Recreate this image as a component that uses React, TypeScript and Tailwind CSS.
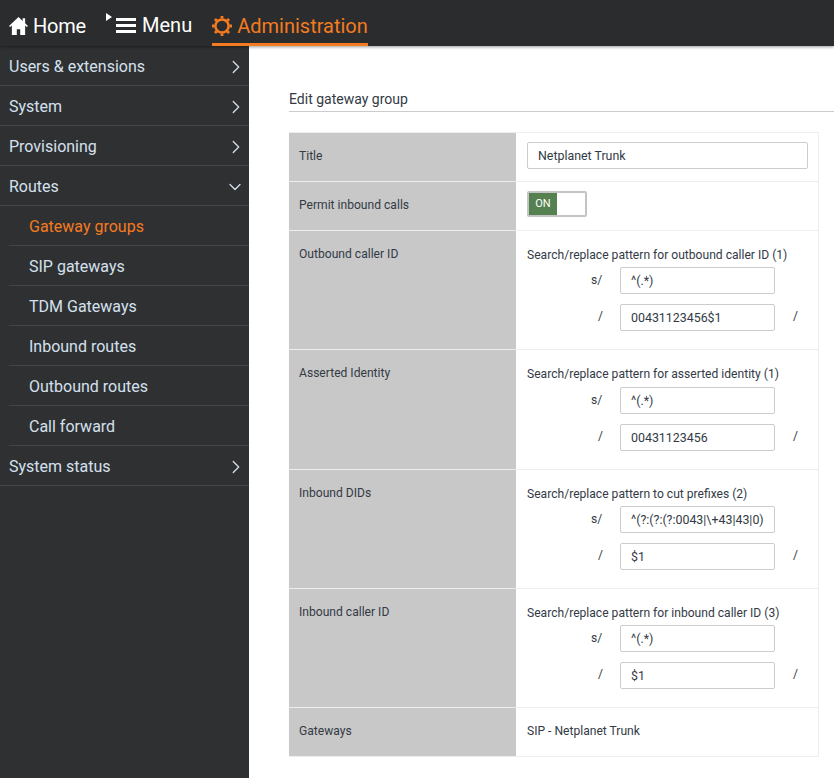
import { ChevronDown, ChevronRight } from 'lucide-react'

const sideItems = [
  { label: 'Users & extensions', arrow: 'right' },
  { label: 'System', arrow: 'right' },
  { label: 'Provisioning', arrow: 'right' },
  { label: 'Routes', arrow: 'down' },
]
const subItems = ['Gateway groups', 'SIP gateways', 'TDM Gateways', 'Inbound routes', 'Outbound routes', 'Call forward']

const patterns = [
  { title: 'Outbound caller ID', hint: 'Search/replace pattern for outbound caller ID (1)', from: '^(.*)', to: '00431123456$1', h: 'h-[119px]', top: 'mt-[4px]' },
  { title: 'Asserted Identity', hint: 'Search/replace pattern for asserted identity (1)', from: '^(.*)', to: '00431123456', h: 'h-[120px]', top: 'mt-[5px]' },
  { title: 'Inbound DIDs', hint: 'Search/replace pattern to cut prefixes (2)', from: '^(?:(?:(?:0043|\\+43|43|0)', to: '$1', h: 'h-[119px]', top: 'mt-[4px]' },
  { title: 'Inbound caller ID', hint: 'Search/replace pattern for inbound caller ID (3)', from: '^(.*)', to: '$1', h: 'h-[119px]', top: 'mt-[4px]' },
]

function HomeIcon() {
  return (
    <svg className="h-[18px] w-[19px]" viewBox="0 0 20 19" fill="#fff">
      <path d="M10 0 0 9.4l1.2 1.2L3 9v10h5.2v-6h3.6v6H17V9l1.8 1.6L20 9.4l-3-2.8V1.4h-2.6v2.8z" />
    </svg>
  )
}

function GearIcon() {
  return (
    <svg className="h-[20px] w-[20px]" viewBox="0 0 20 20" fill="none" stroke="#f47b20">
      <circle cx="10" cy="10" r="6.6" strokeWidth="2.5" />
      <path strokeWidth="2.8" d="M10 0v2.6M10 17.4V20M0 10h2.6M17.4 10H20M2.9 2.9l1.9 1.9M15.2 15.2l1.9 1.9M2.9 17.1l1.9-1.9M15.2 4.8l1.9-1.9" />
    </svg>
  )
}

function TopBar() {
  return (
    <header className="relative z-10 flex h-[46px] items-end bg-[#2a2c2e] pl-[9px] text-[20px] leading-none text-white shadow-[0_1px_3px_rgba(0,0,0,0.4)]">
      <a className="mb-[10px] flex items-center gap-[5px]">
        <HomeIcon />
        <span className="tracking-[-0.2px]">Home</span>
      </a>
      <a className="relative mb-[11px] ml-[30px] flex items-center gap-[6px]">
        <span className="absolute -left-[10px] top-[-2px] h-0 w-0 border-y-[4px] border-l-[6px] border-y-transparent border-l-white" />
        <span className="flex w-[20px] flex-col gap-[3px]">
          <span className="h-[3px] bg-white" />
          <span className="h-[3px] bg-white" />
          <span className="h-[3px] bg-white" />
        </span>
        <span>Menu</span>
      </a>
      <a className="ml-[20px] flex h-[36px] items-center gap-[5px] border-b-[3px] border-[#f47b20] pb-[1px] text-[#f47b20]">
        <GearIcon />
        <span>Administration</span>
      </a>
    </header>
  )
}

function Sidebar() {
  return (
    <aside className="w-[249px] shrink-0 bg-[#2f3032] text-[16px] text-[#d5e0ee]">
      {sideItems.map(item => (
        <div key={item.label} className="flex h-[40px] items-center justify-between border-b border-[#43454d] pl-[9px] pt-[2px]">
          <span>{item.label}</span>
          {item.arrow === 'right'
            ? <ChevronRight className="mr-[2px] h-[22px] w-[22px]" strokeWidth={1.4} />
            : <ChevronDown className="mr-[4px] h-[20px] w-[20px]" strokeWidth={1.5} />}
        </div>
      ))}
      {subItems.map((label, i) => (
        <div key={label} className="ml-[9px] flex h-[40px] items-center border-b border-[#43454d] pl-[20px] pt-[2px]">
          <span className={i === 0 ? 'text-[#f47b20]' : ''}>{label}</span>
        </div>
      ))}
      <div className="flex h-[40px] items-center justify-between border-b border-[#43454d] pl-[9px] pt-[2px]">
        <span>System status</span>
        <ChevronRight className="mr-[2px] h-[22px] w-[22px]" strokeWidth={1.4} />
      </div>
    </aside>
  )
}

function Row({ title, className, children }: { title: string; className: string; children: React.ReactNode }) {
  return (
    <div className={`flex border-b border-[#eeeeee] ${className}`}>
      <div className="w-[227px] shrink-0 bg-[#c8c8c8] pl-[10px] pt-[15px] text-[12.1px] leading-[16px] text-[#333a45]">{title}</div>
      <div className="min-w-0 flex-1 pl-[11px] pr-[10px]">{children}</div>
    </div>
  )
}

function TextInput({ value, className }: { value: string; className: string }) {
  return (
    <input
      readOnly
      value={value}
      className={`rounded-[2px] border border-[#cccccc] bg-white text-[12.4px] text-[#333a45] outline-none ${className}`}
    />
  )
}

function PatternField({ hint, from, to, top }: { hint: string; from: string; to: string; top: string }) {
  return (
    <div className="pt-[16px] text-[12.1px] text-[#333a45]">
      <div className="leading-[16px]">{hint}</div>
      <div className={`${top} grid grid-cols-[93px_155px_1fr] gap-y-[10px]`}>
        <span className="pl-[64px] pt-[5px] leading-[16px]">s/</span>
        <TextInput value={from} className="h-[27px] w-[155px] pl-[10px] pr-[2px]" />
        <span />
        <span className="pl-[71px] pt-[4px] leading-[16px]">/</span>
        <TextInput value={to} className="h-[27px] w-[155px] pl-[10px] pr-[2px]" />
        <span className="pl-[18px] pt-[4px] leading-[16px]">/</span>
      </div>
    </div>
  )
}

export default function App() {
  return (
    <div className="flex h-[778px] w-[834px] flex-col overflow-hidden bg-white font-['Roboto',sans-serif]">
      <TopBar />
      <div className="flex min-h-0 flex-1">
        <Sidebar />
        <main className="min-w-0 flex-1 pl-[40px] pt-[44px]">
          <h2 className="border-b border-[#cccccc] pb-[3px] text-[14px] font-normal leading-[18px] text-[#333a45]">Edit gateway group</h2>
          <div className="mt-[20px] w-[530px] border-r border-t border-[#eeeeee]">
            <Row title="Title" className="h-[49px]">
              <TextInput value="Netplanet Trunk" className="mt-[9px] h-[27px] w-[281px] pl-[10px] pr-[2px]" />
            </Row>
            <Row title="Permit inbound calls" className="h-[49px]">
              <div className="mt-[9px] flex h-[26px] w-[60px] rounded-[2px] border-2 border-[#c4c4c4] bg-white">
                <span className="flex h-full w-[28px] items-center justify-center bg-[#55804f] text-[11px] text-white">ON</span>
              </div>
            </Row>
            {patterns.map(p => (
              <Row key={p.title} title={p.title} className={p.h}>
                <PatternField hint={p.hint} from={p.from} to={p.to} top={p.top} />
              </Row>
            ))}
            <Row title="Gateways" className="h-[49px]">
              <div className="pt-[15px] text-[12.1px] leading-[16px] text-[#333a45]">SIP - Netplanet Trunk</div>
            </Row>
          </div>
        </main>
      </div>
    </div>
  )
}
